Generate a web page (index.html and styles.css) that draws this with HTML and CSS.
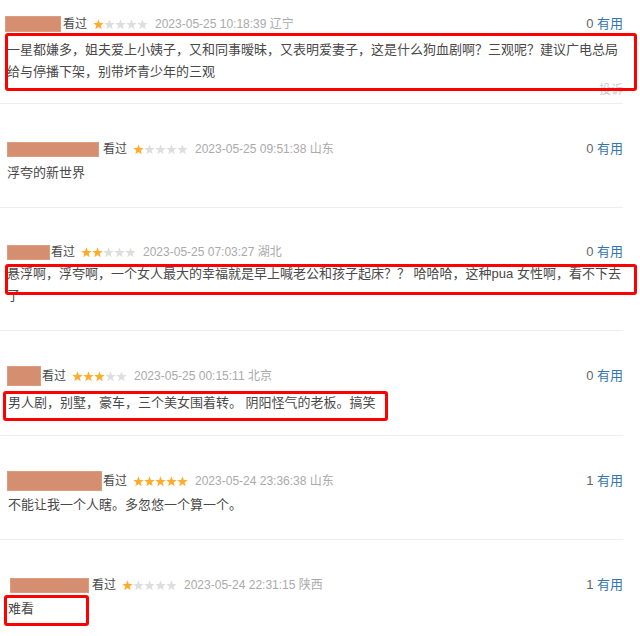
FILE: index.html
```html
<!DOCTYPE html>
<html lang="zh">
<head>
<meta charset="utf-8">
<title>短评</title>
<link rel="stylesheet" href="styles.css">
</head>
<body>
<svg class="defs" aria-hidden="true">
  <symbol id="star" viewBox="0 0 11 11">
    <path d="M5.5 .3L6.85 3.94L10.73 4.1L7.69 6.51L8.73 10.25L5.5 8.1L2.27 10.25L3.31 6.51L.27 4.1L4.15 3.94Z"/>
  </symbol>
</svg>
<div class="list">
  <div class="comment c1">
    <div class="head">
      <span class="user u1"></span><span class="seen s1">看过</span>
      <svg class="stars" viewBox="0 0 55 11"><use href="#star" class="on" x="0" width="11" height="11"/><use href="#star" class="off" x="11" width="11" height="11"/><use href="#star" class="off" x="22" width="11" height="11"/><use href="#star" class="off" x="33" width="11" height="11"/><use href="#star" class="off" x="44" width="11" height="11"/></svg>
      <span class="time">2023-05-25 10:18:39 辽宁</span>
      <span class="votes"><span class="count">0</span> <span class="useful">有用</span></span>
    </div>
    <p class="text">一星都嫌多，姐夫爱上小姨子，又和同事暧昧，又表明爱妻子，这是什么狗血剧啊？三观呢？建议广电总局给与停播下架，别带坏青少年的三观</p>
    <div class="report">投诉</div>
    <span class="mark m1"></span>
  </div>

  <div class="comment c2">
    <div class="head">
      <span class="user u2"></span><span class="seen s2">看过</span>
      <svg class="stars" viewBox="0 0 55 11"><use href="#star" class="on" x="0" width="11" height="11"/><use href="#star" class="off" x="11" width="11" height="11"/><use href="#star" class="off" x="22" width="11" height="11"/><use href="#star" class="off" x="33" width="11" height="11"/><use href="#star" class="off" x="44" width="11" height="11"/></svg>
      <span class="time">2023-05-25 09:51:38 山东</span>
      <span class="votes"><span class="count">0</span> <span class="useful">有用</span></span>
    </div>
    <p class="text">浮夸的新世界</p>
  </div>

  <div class="comment c3">
    <div class="head">
      <span class="user u3"></span><span class="seen s3">看过</span>
      <svg class="stars" viewBox="0 0 55 11"><use href="#star" class="on" x="0" width="11" height="11"/><use href="#star" class="on" x="11" width="11" height="11"/><use href="#star" class="off" x="22" width="11" height="11"/><use href="#star" class="off" x="33" width="11" height="11"/><use href="#star" class="off" x="44" width="11" height="11"/></svg>
      <span class="time">2023-05-25 07:03:27 湖北</span>
      <span class="votes"><span class="count">0</span> <span class="useful">有用</span></span>
    </div>
    <p class="text">悬浮啊，浮夸啊，一个女人最大的幸福就是早上喊老公和孩子起床？？ 哈哈哈，这种pua 女性啊，看不下去了</p>
    <span class="mark m3"></span>
  </div>

  <div class="comment c4">
    <div class="head">
      <span class="user u4"></span><span class="seen s4">看过</span>
      <svg class="stars" viewBox="0 0 55 11"><use href="#star" class="on" x="0" width="11" height="11"/><use href="#star" class="on" x="11" width="11" height="11"/><use href="#star" class="on" x="22" width="11" height="11"/><use href="#star" class="off" x="33" width="11" height="11"/><use href="#star" class="off" x="44" width="11" height="11"/></svg>
      <span class="time">2023-05-25 00:15:11 北京</span>
      <span class="votes"><span class="count">0</span> <span class="useful">有用</span></span>
    </div>
    <p class="text">男人剧，别墅，豪车，三个美女围着转。 阴阳怪气的老板。搞笑</p>
    <span class="mark m4"></span>
  </div>

  <div class="comment c5">
    <div class="head">
      <span class="user u5"></span><span class="seen s5">看过</span>
      <svg class="stars" viewBox="0 0 55 11"><use href="#star" class="on" x="0" width="11" height="11"/><use href="#star" class="on" x="11" width="11" height="11"/><use href="#star" class="on" x="22" width="11" height="11"/><use href="#star" class="on" x="33" width="11" height="11"/><use href="#star" class="on" x="44" width="11" height="11"/></svg>
      <span class="time">2023-05-24 23:36:38 山东</span>
      <span class="votes"><span class="count">1</span> <span class="useful">有用</span></span>
    </div>
    <p class="text">不能让我一个人瞎。多忽悠一个算一个。</p>
  </div>

  <div class="comment c6">
    <div class="head">
      <span class="user u6"></span><span class="seen s6">看过</span>
      <svg class="stars" viewBox="0 0 55 11"><use href="#star" class="on" x="0" width="11" height="11"/><use href="#star" class="off" x="11" width="11" height="11"/><use href="#star" class="off" x="22" width="11" height="11"/><use href="#star" class="off" x="33" width="11" height="11"/><use href="#star" class="off" x="44" width="11" height="11"/></svg>
      <span class="time">2023-05-24 22:31:15 陕西</span>
      <span class="votes"><span class="count">1</span> <span class="useful">有用</span></span>
    </div>
    <p class="text">难看</p>
    <span class="mark m6"></span>
  </div>
</div>
</body>
</html>
```
FILE: styles.css
```css
html, body {
  margin: 0;
  padding: 0;
  background: #fff;
}
body {
  font-family: "Liberation Sans", Arial, "Noto Sans CJK SC", sans-serif;
  color: #494949;
  overflow: hidden;
}
.defs {
  position: absolute;
  width: 0;
  height: 0;
  overflow: hidden;
}
.list {
  width: 623px;
}
.comment {
  position: relative;
  padding: 35px 0 23px;
  border-bottom: 1px solid #eee;
}
.c1 { padding-top: 14px; padding-bottom: 6px; }
.c3 { padding-top: 34px; }
.c4 { padding-bottom: 21px; }
.c6 { border-bottom: none; }

.head {
  display: flex;
  align-items: center;
  height: 20px;
  font-size: 12px;
  line-height: 20px;
  white-space: nowrap;
}
.user {
  display: block;
  flex: none;
  background: #d58e6f;
  box-shadow: inset 0 0 0 1px #dc9c80;
  height: 15px;
}
.u1 { margin-left: 5px; width: 56px; height: 16px; }
.u2 { margin-left: 7px; width: 92px; }
.u3 { margin-left: 7px; width: 43px; }
.u4 { margin-left: 7px; width: 34px; height: 20px; }
.u5 { margin-left: 7px; width: 95px; height: 20px; }
.u6 { margin-left: 10px; width: 79px; }

.seen { color: #494949; }
.s1 { margin-left: 2px; }
.s2 { margin-left: 4px; }
.s3, .s4, .s5 { margin-left: 1px; }
.s6 { margin-left: 3px; }

.stars {
  flex: none;
  width: 55px;
  height: 11px;
  margin: 0 7px 0 6px;
}
.on { fill: #ffac2d; }
.off { fill: #dedede; }

.time { color: #aaa; }
.votes {
  margin-left: auto;
  font-size: 13px;
  color: #666;
}
.useful { color: #3377aa; }

.text {
  margin: 3px 0 0;
  padding-left: 7px;
  font-size: 13px;
  line-height: 22px;
}
.c1 .text { margin-top: 5px; }
.c3 .text { margin-top: 1px; }
.c4 .text { margin-top: 6px; padding-left: 8px; }
.c5 .text, .c6 .text { padding-left: 8px; }

.report {
  text-align: right;
  font-size: 12px;
  line-height: 14px;
  color: #ccc;
}

.mark {
  position: absolute;
  box-sizing: border-box;
  border: 3px solid #f00;
  border-radius: 3px;
}
.m1 { left: 5px; top: 33px; width: 632px; height: 58px; }
.m3 { left: 5px; top: 56px; width: 632px; height: 31px; }
.m4 { left: 3px; top: 60px; width: 385px; height: 30px; }
.m6 { left: 4px; top: 55px; width: 85px; height: 31px; }
```
